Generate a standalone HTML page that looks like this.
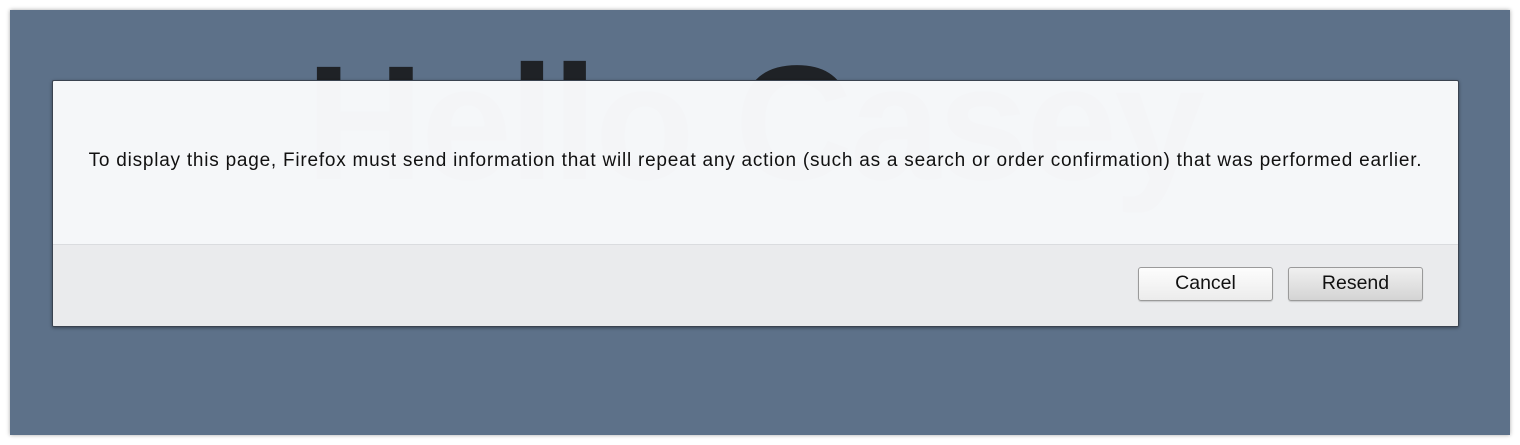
<!DOCTYPE html>
<html><head><meta charset="utf-8"><style>
html,body{margin:0;padding:0;width:1520px;height:445px;background:#fff;overflow:hidden;font-family:"Liberation Sans",Arial,sans-serif}
.bg{position:absolute;left:10px;top:10px;width:1500px;height:425px;background:#5d7189;box-shadow:0 0 4px rgba(0,0,0,.35)}
.hello{position:absolute;left:306px;top:41px;font-size:163px;font-weight:bold;color:#1f2226;white-space:nowrap;line-height:1;letter-spacing:-2.5px}
.dlg{position:absolute;left:52px;top:80px;width:1405px;height:245px;border:1px solid #3a4350;border-radius:2px;background:rgba(248,249,251,.983);box-shadow:0 1px 3px rgba(0,0,0,.4);overflow:hidden}
.msg{position:absolute;left:0;right:0;top:69px;text-align:center;font-size:19px;letter-spacing:0.77px;color:#111;white-space:nowrap}
.foot{position:absolute;left:0;right:0;top:163px;bottom:0;background:rgba(234,235,237,.99);border-top:1px solid #dadcdf}
.btn{position:absolute;top:22px;width:135px;height:34px;border:1px solid #9a9a9a;border-radius:3px;box-sizing:border-box;font-size:19.5px;text-align:center;line-height:31px;color:#111;box-shadow:0 1px 1px rgba(0,0,0,.15)}
.c{left:1085px;background:linear-gradient(#fdfdfd,#ececec)}
.r{left:1235px;background:linear-gradient(#f0f0f0,#d4d4d4)}
</style></head><body>
<div class="bg"></div>
<div class="hello">Hello Casey</div>
<div class="dlg">
<div class="msg">To display this page, Firefox must send information that will repeat any action (such as a search or order confirmation) that was performed earlier.</div>
<div class="foot"><div class="btn c">Cancel</div><div class="btn r">Resend</div></div>
</div>
</body></html>
